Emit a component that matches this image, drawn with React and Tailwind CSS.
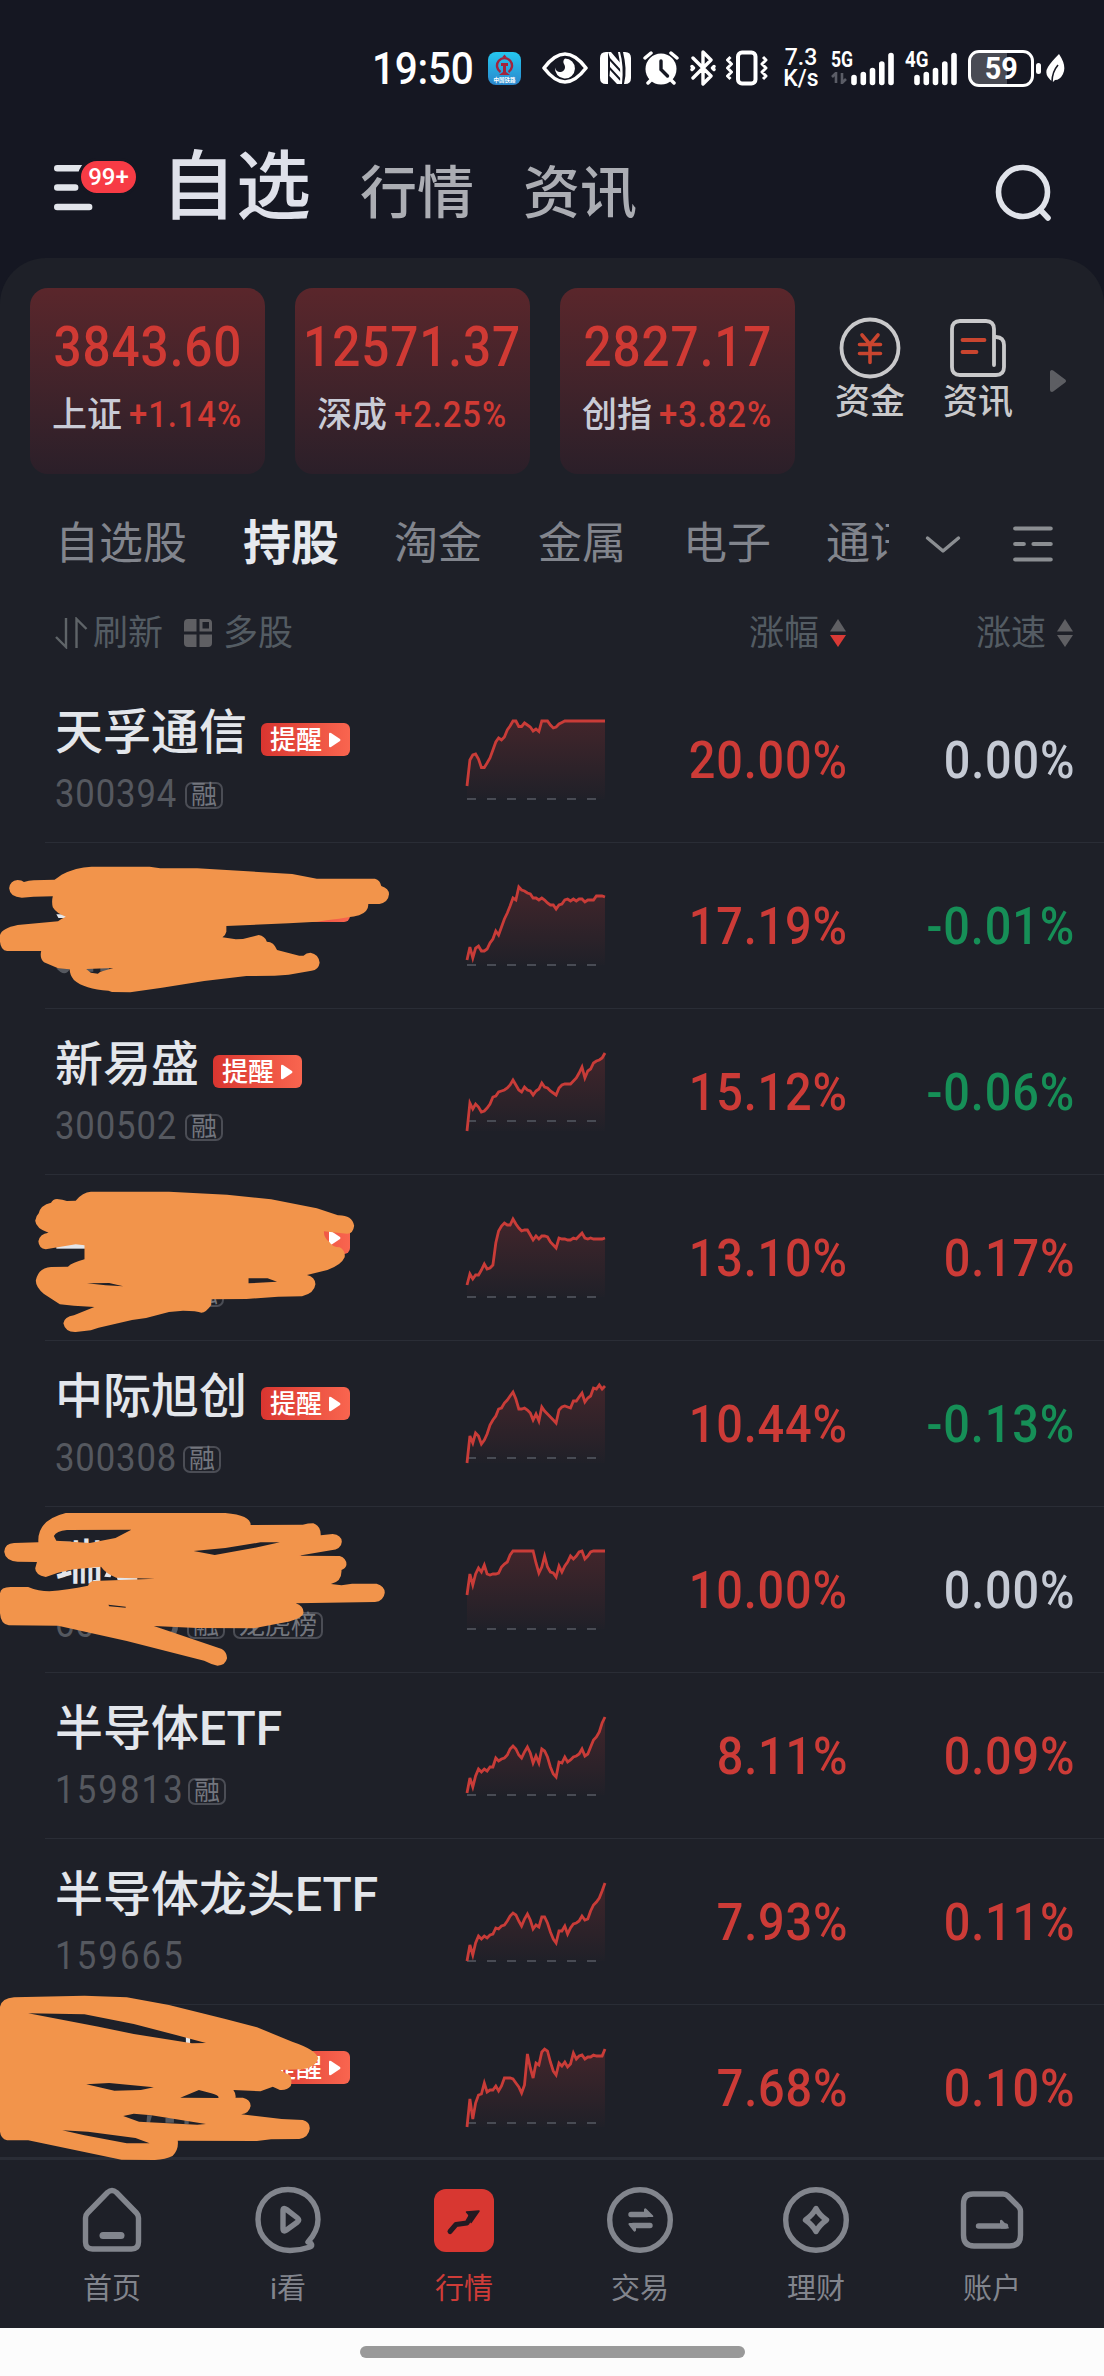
import React from 'react';
import clsx from 'clsx';

const INDICES = [
  { name: '上证', value: '3843.60', change: '+1.14%' },
  { name: '深成', value: '12571.37', change: '+2.25%' },
  { name: '创指', value: '2827.17', change: '+3.82%' }
];

const STOCKS = [
  {
    name: '天孚通信', code: '300394', codeWidth: 130, alert: true, tags: ['融'], change: '20.00%', speed: '0.00%', base: 78,
    line: [65, 39, 34, 33, 38, 46.5, 46.5, 42, 37, 29, 21, 17, 19, 16, 9, 5, 0, 0, 5.5, 5.5, 2, 4, 6, 10, 8, 10.5, 0, 0, 0, 4, 7, 6, 3, 1.5, 0, 0, 0, 0, 0, 0, 0, 0, 0, 0, 0, 0, 0, 0, 0]
  },
  {
    nameWidth: 192, alert: true, change: '17.19%', speed: '-0.01%', base: 78,
    line: [73, 60, 71, 61, 59, 64, 64, 62, 56, 52, 44, 48, 40, 32, 26, 19, 11, 13, 0, 3, 4, 6, 7, 11, 11, 13, 11, 13, 16, 18, 18, 22, 18, 17, 13, 12, 14, 12, 14, 12, 12, 15, 13, 13, 13, 9, 9, 9, 10]
  },
  {
    name: '新易盛', code: '300502', codeWidth: 130, alert: true, tags: ['融'], change: '15.12%', speed: '-0.06%', base: 68,
    line: [78, 50, 56, 51, 54, 59, 58, 55, 51, 44, 43, 39, 38, 37, 35, 32, 27, 32, 37, 39, 34, 37, 38, 42, 38, 36, 30, 34, 35, 38, 40, 42, 35, 32, 31, 31, 31, 28, 25, 20, 14, 25, 18, 16, 10, 8, 7, 5, 0]
  },
  {
    nameWidth: 192, codeWidth: 131, alert: true, tags: ['融'], change: '13.10%', speed: '0.17%', base: 78,
    line: [66, 55, 60, 56, 56, 51, 45, 50, 49, 46, 24, 12, 7, 4, 6, 6, 0, 5, 9, 12, 11, 11, 16, 21, 17, 20, 17, 17, 18, 23, 26, 29, 19, 20, 20, 21, 21, 19, 20, 17, 14, 19, 20, 19, 20, 20, 20, 20, 19]
  },
  {
    name: '中际旭创', code: '300308', codeWidth: 128, alert: true, tags: ['融'], change: '10.44%', speed: '-0.13%', base: 73,
    line: [78, 51, 58, 48, 51, 59, 55, 49, 40, 35, 31, 24, 23, 18, 15, 11, 7, 14, 24, 24, 23, 25, 28, 35, 29, 36, 22, 26, 29, 32, 35, 38, 25, 22, 21, 22, 23, 16, 16, 12, 8, 17, 13, 11, 3, 4, 0, 4, 1]
  },
  {
    name: '瑞', nameWidth: 144, code: '60', codeWidth: 132, alert: true, tags: ['融', '龙虎榜'], change: '10.00%', speed: '0.00%', base: 78,
    line: [44, 23, 34, 23, 17, 21, 14, 23, 24, 23, 23, 22, 16, 13, 11, 4, 0, 0, 0, 0, 0, 0, 0, 0, 12, 22, 16, 5, 16, 21, 22, 26, 15, 21, 15, 11, 5, 8, 5, 1, 0, 8, 5, 1, 0, 0, 0, 0, 0]
  },
  {
    name: '半导体ETF', code: '159813', codeWidth: 133, tags: ['融'], change: '8.11%', speed: '0.09%', base: 78, wideCode: true,
    line: [76, 61, 70, 59, 52, 55, 52, 54, 50, 50, 41, 44, 42, 41, 38, 32, 29, 32, 38, 41, 35, 30, 36, 46, 39, 46, 32, 34, 40, 50, 57, 60, 45, 46, 40, 45, 43, 40, 39, 37, 32, 39, 37, 30, 23, 20, 15, 6, 0]
  },
  {
    name: '半导体龙头ETF', code: '159665', change: '7.93%', speed: '0.11%', base: 78, wideCode: true,
    line: [78, 62, 72, 60, 53, 56, 53, 55, 52, 51, 45, 46, 43, 42, 38, 33, 30, 32, 38, 43, 36, 31, 37, 46, 42, 44, 34, 34, 40, 49, 56, 60, 48, 48, 43, 51, 45, 41, 40, 38, 33, 37, 36, 28, 22, 19, 15, 8, 0]
  },
  {
    nameWidth: 192, alert: true, change: '7.68%', speed: '0.10%', base: 74,
    line: [78, 50, 70, 54, 46, 45, 34, 43, 41, 41, 37, 42, 37, 29, 29, 29, 30, 34, 38, 44, 36, 5, 19, 29, 14, 16, 3, 0, 2, 13, 22, 26, 14, 17, 13, 18, 15, 4, 10, 7, 6, 10, 8, 8, 6, 7, 7, 7, 0]
  }
];

// Tall narrow digits
const Num = ({ children, className, spacing = 'tracking-[1px]' }) => (
  <span className={clsx('inline-block scale-x-90 whitespace-nowrap leading-none', spacing, className)}>{children}</span>
);

const SignalBars = () => (
  <svg width="44" height="34" viewBox="0 0 44 34" stroke="#fff" strokeWidth="5.6" strokeLinecap="round">
    <path d="M3 25.5v5M12.3 22.5v8M21.5 18.5v12M30.8 12v18.500M40 3.500v27" />
  </svg>
);

const StatusBar = () => (
  <div className="flex h-[136px] items-center pl-[372px] text-white">
    <div className="w-[116px]">
      <Num className="origin-left text-[45px] font-medium" spacing="tracking-[-0.3px]">19:50</Num>
    </div>
    <svg width="33" height="33" viewBox="0 0 33 33">
      <defs>
        <linearGradient id="rail" x1="0" y1="0" x2="0" y2="1">
          <stop offset="0" stopColor="#25c8f0" />
          <stop offset="1" stopColor="#2a86cc" />
        </linearGradient>
      </defs>
      <rect width="33" height="33" rx="8" fill="url(#rail)" />
      <path d="M12.500 20A7.500 7.500 0 1 1 20.500 20" fill="none" stroke="#a3243c" strokeWidth="2.400" />
      <path d="M13 11h7v3h-2v6l4 3H11l4-3v-6h-2z" fill="#a3243c" />
      <path d="M14 5.500l2.500-3 2.500 3z" fill="#a3243c" />
      <text x="16.500" y="30" fontSize="5.500" fontWeight="700" fill="#fff" textAnchor="middle">中国铁路</text>
    </svg>
    <svg className="ml-[21px]" width="46" height="32" viewBox="0 0 46 32" fill="none">
      <path d="M2 16C10 5.500 16 2 23 2s13 3.500 21 14C36 26.500 30 30 23 30S10 26.500 2 16z" stroke="#fff" strokeWidth="3.600" strokeLinejoin="round" />
      <path d="M23 6.500a10 10 0 1 1-10 9c1 4 3.500 5 6 4.500 4-1 5-5 3-8-1-1.500-1-4 1-5.500z" fill="#fff" />
    </svg>
    <svg className="ml-[12px]" width="31" height="32" viewBox="0 0 31 32" fill="#fff">
      <path d="M6 0h2v32H6q-6 0-6-6V6q0-6 6-6zM23 0h2q6 0 6 6v20q0 6-6 6h-1q2-8 1.500-16T23 0z" />
      <path d="M8 0h3l11 13v6L10 6zM10 9l12 13v6L10 15zM10 18l12 13v1h-5L9.500 24z" />
      <path d="M18 0h2q4 14 2 32h-2q1-20-2-32z" />
    </svg>
    <svg className="ml-[12px]" width="36" height="34" viewBox="0 0 36 34">
      <circle cx="18" cy="18" r="15.500" fill="#fff" />
      <path d="M2 7l6-5M34 7l-6-5M5 32l4-4M31 32l-4-4" stroke="#fff" strokeWidth="3.500" strokeLinecap="round" />
      <path d="M18 10v8.500l6.500 6.500" stroke="#151722" strokeWidth="3.400" strokeLinecap="round" fill="none" />
    </svg>
    <svg className="ml-[11px]" width="26" height="36" viewBox="0 0 26 36" fill="none" stroke="#fff" strokeWidth="3.400" strokeLinejoin="round" strokeLinecap="round">
      <path d="M3 8l18 18-8 8V2l8 8L3 28M2 16.500l1.500 1.500L2 19.500M24 16.500l-1.500 1.500 1.500 1.500" />
    </svg>
    <svg className="ml-[9px]" width="43" height="36" viewBox="0 0 43 36" fill="none" stroke="#fff">
      <rect x="13" y="2.500" width="17.500" height="31" rx="4" strokeWidth="4" />
      <path d="M5.500 7l-3 3 4 4-4 4 4 4-4 4 3 3M38 7l3 3-4 4 4 4-4 4 4 4-3 3" strokeWidth="3" strokeLinejoin="round" />
    </svg>
    <div className="ml-[15px] w-[36px] text-center text-[23px] leading-[21px] font-medium">
      <div>7.3</div>
      <div>K/s</div>
    </div>
    <div className="relative ml-[12px] flex h-[36px] w-[64px] items-end justify-end">
      <span className="absolute top-[-1px] left-0 origin-left scale-x-[.8] text-[22px] leading-none font-bold">5G</span>
      <svg className="absolute bottom-[2px] left-0" width="16" height="12" viewBox="0 0 16 12" stroke="#5a5c66" strokeWidth="2.600" fill="none">
        <path d="M1 5l4-4v10M15 7l-4 4V1" />
      </svg>
      <SignalBars />
    </div>
    <div className="relative ml-[10px] flex h-[36px] w-[53px] items-end justify-end">
      <span className="absolute top-[-1px] left-0 origin-left scale-x-[.85] text-[22px] leading-none font-bold">4G</span>
      <SignalBars />
    </div>
    <div className="ml-[10px] flex h-[37px] w-[66px] shrink-0 items-center justify-center rounded-[11px] border-[3px] border-white bg-linear-to-r from-[#494b54] from-60% to-[#151722] to-60% text-[32px] leading-none font-bold">
      <Num spacing="tracking-[0px]">59</Num>
    </div>
    <div className="ml-[2px] h-[11px] w-[5px] shrink-0 rounded-full bg-white" />
    <svg className="ml-[5px] shrink-0" width="20" height="30" viewBox="0 0 20 30">
      <path d="M13 1q8 12 4 20-3 6-8 6l-2 2Q-3 22 2 14q3-5 11-13z" fill="#fff" />
      <path d="M6 29q0-10 6-17" stroke="#151722" strokeWidth="1.600" fill="none" />
    </svg>
  </div>
);

const Header = () => (
  <div className="flex h-[122px] items-start pl-[54px]">
    <div className="relative h-[46px] w-[82px] pt-[29px]">
      <svg width="40" height="46" viewBox="0 0 40 46" stroke="#e2e5eb" strokeWidth="6.400" strokeLinecap="round">
        <path d="M3.200 3.200h24M3.200 22.500h18M3.200 42h32" />
      </svg>
      <span className="absolute top-[22px] left-[24px] flex h-[38px] w-[61px] items-center justify-center rounded-full border-[3px] border-[#151722] bg-[#f73b45] text-[24px] leading-none font-medium text-white">
        99+
      </span>
    </div>
    <div className="ml-[25px] flex items-baseline leading-none">
      <span className="mt-[14px] text-[75px] font-medium text-[#dfe1ea]">自选</span>
      <span className="ml-[49px] text-[57px] font-medium text-[#abadb3]">行情</span>
      <span className="ml-[49px] text-[57px] font-medium text-[#abadb3]">资讯</span>
    </div>
    <svg className="mt-[28px] mr-[52px] ml-auto" width="58" height="58" viewBox="0 0 58 58" fill="none" stroke="#e0e3ea" strokeWidth="5.600" strokeLinecap="round">
      <circle cx="29" cy="28" r="24.500" />
      <path d="M46 45.500l8 8.500" />
    </svg>
  </div>
);

const IndexCard = ({ name, value, change }) => (
  <div className="h-[186px] w-[235px] rounded-[18px] bg-linear-to-b from-[#5a262b] to-[#2b1f29] pt-[32px]">
    <div className="flex justify-center text-[55px] leading-none text-[#d03a34]">
      <Num className="font-medium">{value}</Num>
    </div>
    <div className="mt-[22px] flex items-center pl-[22px] text-[35px] leading-none">
      <span className="w-[77px] font-medium text-[#c9cbd6]">{name}</span>
      <Num className="origin-left text-[36.500px] font-medium text-[#d03a34]">{change}</Num>
    </div>
  </div>
);

const IndexBar = () => (
  <div className="flex gap-[30px] pt-[30px] pl-[30px]">
    {INDICES.map((item) => (
      <IndexCard key={item.name} {...item} />
    ))}
    <div className="flex pt-[29px] text-[35px] leading-none font-medium text-[#c9c9cb]">
      <div className="ml-[10px] flex w-[70px] flex-col items-center">
        <svg width="62" height="62" viewBox="0 0 62 62" fill="none" strokeLinecap="round">
          <circle cx="31" cy="31" r="28.500" stroke="#c9c9cb" strokeWidth="3.800" />
          <path d="M23 18l8 9.500 8-9.500M20.500 27.500h21M20.500 36.500h21M31 27.500v18" stroke="#c9452f" strokeWidth="3.600" />
        </svg>
        <span className="mt-[6px]">资金</span>
      </div>
      <div className="ml-[38px] flex w-[70px] flex-col items-center">
        <svg width="62" height="62" viewBox="0 0 62 62" fill="none" stroke="#c9c9cb" strokeWidth="3.800" strokeLinecap="round">
          <path d="M47 48V12q0-8-8-8H13q-8 0-8 8v38q0 8 8 8h36q8 0 8-8V28q0-8-8-8" />
          <path d="M15.500 23h22M15.500 35h14" stroke="#c9452f" />
        </svg>
        <span className="mt-[6px]">资讯</span>
      </div>
      <svg className="mt-[52px] ml-[37px]" width="18" height="24" viewBox="0 0 18 24">
        <path d="M2 3v18l12-9z" fill="#5d5e63" stroke="#5d5e63" strokeWidth="4" strokeLinejoin="round" />
      </svg>
    </div>
  </div>
);

const Tabs = () => (
  <div className="mt-[45px] flex h-[50px] items-center pl-[55px] text-[44px] leading-none text-[#82858d]">
    <div className="flex h-[70px] w-[834px] items-center overflow-hidden whitespace-nowrap">
      <span className="w-[188px] shrink-0">自选股</span>
      <span className="w-[151px] shrink-0 text-[48px] font-bold text-[#e6e9ee]">持股</span>
      <span className="w-[144px] shrink-0">淘金</span>
      <span className="w-[145px] shrink-0">金属</span>
      <span className="w-[143px] shrink-0">电子</span>
      <span className="shrink-0">通讯</span>
    </div>
    <svg className="ml-[36px]" width="36" height="20" viewBox="0 0 36 20" fill="none" stroke="#8b8e92" strokeWidth="3.400" strokeLinecap="round" strokeLinejoin="round">
      <path d="M2.500 4L18 17 33.500 4" />
    </svg>
    <svg className="ml-[52px]" width="40" height="36" viewBox="0 0 40 36" stroke="#8b8e92" strokeWidth="4.200" strokeLinecap="round">
      <path d="M2.200 2.500h35.500M2.200 18h8.600M20.500 18h17.200M2.200 33.500h35.500" />
    </svg>
  </div>
);

const SortArrows = ({ active }) => (
  <svg width="16" height="30" viewBox="0 0 16 30">
    <path d="M8 1l8 12.500H0z" fill="#5f5f63" />
    <path d="M8 29L0 17h16z" fill={active ? '#d93a36' : '#5f5f63'} />
  </svg>
);

const FilterRow = () => (
  <div className="mt-[46px] flex h-[36px] items-center pl-[55px] text-[35px] leading-none text-[#545c63]">
    <svg width="33" height="32" viewBox="0 0 33 32" fill="none" stroke="#5f6468" strokeWidth="2.400">
      <path d="M11 1v29L1 20M21.500 31V2l10 10" />
    </svg>
    <span className="mt-px ml-[5px]">刷新</span>
    <svg className="ml-[21px]" width="28" height="28" viewBox="0 0 28 28" fill="#5f5f63">
      <path d="M4 0h8.500v12.500H0V4q0-4 4-4zM0 15.500h12.500V28H4q-4 0-4-4zM15.500 15.500H28V24q0 4-4 4h-8.500z" />
      <path fillRule="evenodd" d="M15.500 0H24q4 0 4 4v8.500H15.500zM18.500 3v6.500H25V3z" />
    </svg>
    <span className="mt-px ml-[11px]">多股</span>
    <span className="mt-px ml-auto">涨幅</span>
    <span className="ml-[11px] w-[16px]"><SortArrows active /></span>
    <span className="mt-px ml-[130px]">涨速</span>
    <span className="mr-[31px] ml-[11px] w-[16px]"><SortArrows /></span>
  </div>
);

const Sparkline = ({ line, base }) => {
  const step = 138 / (line.length - 1);
  const points = line.map((y, i) => `${(i * step + 2).toFixed(1)} ${y + 3}`).join('L');
  return (
    <svg className="mt-[41px] shrink-0" width="142" height="90" viewBox="0 0 142 90" fill="none">
      <defs>
        <linearGradient id="fade" gradientUnits="userSpaceOnUse" x1="0" y1="0" x2="0" y2="80">
          <stop offset="0" stopColor="#d93a36" stopOpacity=".2" />
          <stop offset="1" stopColor="#d93a36" stopOpacity=".01" />
        </linearGradient>
      </defs>
      <path d={`M${points}V81H2z`} fill="url(#fade)" />
      <path d={`M2 ${base + 3}h131`} stroke="#484b54" strokeWidth="2" strokeDasharray="9 11" />
      <path d={`M${points}`} stroke="#c93c38" strokeWidth="2.800" />
    </svg>
  );
};

const AlertTag = () => (
  <span className="mt-[13px] ml-[14px] flex h-[33px] w-[89px] items-center rounded-[6px] bg-linear-to-r from-[#d93530] to-[#f9654f] pl-[9px] text-[26px] leading-none font-medium text-white">
    <span className="mt-px">提醒</span>
    <svg className="ml-[7px]" width="12" height="16" viewBox="0 0 12 16" fill="#fff">
      <path d="M0 2q0-2 2-1l9 6q1 1 0 2l-9 6q-2 1-2-1z" />
    </svg>
  </span>
);

const speedColor = (speed) => {
  if (speed.startsWith('-')) return 'text-[#168f57]';
  return speed === '0.00%' ? 'text-[#c5cad4]' : 'text-[#cc3b37]';
};

const StockRow = ({ name, nameWidth, code, codeWidth, wideCode, alert, tags = [], change, speed, line, base }) => (
  <div className="relative flex h-[166px] shrink-0 pl-[55px]">
    <div className="w-[410px] shrink-0 pt-[32px]">
      <div className="flex h-[48px] items-center">
        <span className="text-[48px] leading-none font-medium whitespace-nowrap text-[#e3e6eb]" style={{ width: nameWidth }}>{name}</span>
        {alert && <AlertTag />}
      </div>
      <div className="mt-[17px] flex h-[40px] items-center text-[38.500px] text-[#55585f]">
        <span className="shrink-0 leading-none" style={{ width: codeWidth }}>
          <Num className="origin-left" spacing={wideCode ? 'tracking-[2.4px]' : 'tracking-[1px]'}>{code}</Num>
        </span>
        {tags.map((tag) => (
          <span key={tag} className="mt-[2px] mr-[8px] flex h-[27px] items-center rounded-[7px] border-2 border-[#4b4d55] px-[4px] text-[26px] leading-none text-[#73767e]">{tag}</span>
        ))}
      </div>
    </div>
    <Sparkline line={line} base={base} />
    <div className="w-[241px] pt-[58px] text-right text-[52px] leading-none text-[#cc3b37]">
      <Num className="origin-right font-medium">{change}</Num>
    </div>
    <div className={clsx('w-[227px] pt-[58px] text-right text-[52px] leading-none', speedColor(speed))}>
      <Num className="origin-right font-medium">{speed}</Num>
    </div>
    <div className="absolute right-0 bottom-0 left-[45px] h-px bg-[#2a2d36]" />
  </div>
);

// Freehand marker strokes that cover some of the names
const Marker = ({ className, d, under, viewBox }) => (
  <svg className={clsx('absolute left-0', className)} viewBox={viewBox} preserveAspectRatio="none">
    {under}
    <path d={d} fill="#f2944b" fillRule="evenodd" />
  </svg>
);

const Markers = () => (
  <>
    <Marker
      className="top-[860px] h-[140px] w-[552px]"
      viewBox="0 570 1568 420"
      under={
        <>
          <path d="M160 733h30v11h-24z" fill="#e3e6eb" />
          <path d="M160 895h40q-15 30-40 0zM245 893h20v12h-20zM285 893h25v10h-25z" fill="#55585f" />
        </>
      }
      d="M50 630Q62 630 68 636Q82 631 96 631L155 629Q165 622 175 614Q215 592 260 590L425 590L455 595L560 595L830 612L900 626L1065 626Q1080 630 1083 648Q1105 655 1105 673Q1103 697 1078 702L1046 702Q1048 725 1020 736Q1000 742 900 755L820 760L643 768L643 785Q640 797 632 802L670 808L690 807L735 795Q752 798 758 815Q778 815 787 840L850 857L862 857Q870 848 882 848Q905 852 908 878Q905 900 885 902L820 914L780 917L700 918L580 933L460 953L370 967L318 966L308 962Q240 958 210 930Q198 915 198 898L165 895L125 877Q112 865 117 843L20 843Q2 840 0 815L0 795Q5 775 50 765L165 754Q175 745 187 740Q160 730 150 712Q146 695 150 679L95 680L62 683Q28 682 26 655Q28 632 50 630ZM245 897L322 894L285 905L278 911L258 908Z"
    />
    <Marker
      className="top-[1170px] h-[170px] w-[552px]"
      viewBox="0 0 1568 510"
      under={<path d="M160 222h82v14h-82z" fill="#e3e6eb" />}
      d="M162 87Q178 88 190 93L215 92Q235 66 258 65L480 65L645 74L770 88L900 115L960 136Q1000 135 1006 167Q1003 192 985 191L920 184Q920 205 935 215Q945 232 965 232Q982 242 979 262Q970 285 930 300L872 315Q895 320 896 343Q893 370 858 379L790 380L700 387L600 388L600 405Q585 428 572 428Q560 422 520 422L480 426L415 444L375 450L280 473L258 481L215 486Q185 487 180 460Q183 440 210 436L268 411L210 407L170 403L125 372Q100 350 102 330Q110 293 145 291L193 290Q205 278 240 268L240 226L215 223L130 238Q110 235 109 214Q112 192 138 188Q102 175 100 152Q102 138 110 130Q115 105 145 98Q150 88 162 87ZM247 340L310 339L350 349L300 346ZM706 325L760 325L787 335L706 340Z"
    />
    <Marker
      className="top-[1505px] h-[165px] w-[552px]"
      viewBox="0 1005 1568 495"
      under={
        <>
          <path d="M296 1220l12-26 14 4-8 24zM330 1216h60v14h-56z" fill="#e3e6eb" />
          <path d="M478 1400q28 4 28-34h-16q2 22-14 22z" fill="#55585f" />
          <path d="M550 1110h250v50h-250z" fill="#1e2028" />
        </>
      }
      d="M187 1029L640 1029Q712 1035 712 1065L860 1064Q875 1060 890 1060Q912 1068 911 1096L945 1092Q970 1095 971 1115Q970 1137 940 1141L848 1157L965 1158Q985 1165 984 1185Q982 1195 970 1200Q972 1235 940 1242L970 1246L1000 1241L1070 1241Q1093 1248 1093 1268Q1090 1293 1065 1296L840 1300Q863 1308 862 1328Q860 1345 810 1357L720 1375L560 1374L437 1368L630 1437Q645 1447 645 1465Q640 1487 618 1487Q600 1483 580 1472L360 1413L165 1367L25 1366Q2 1363 0 1330L0 1270Q2 1251 30 1251L80 1251Q110 1264 140 1264Q190 1260 250 1247Q255 1235 265 1233L440 1226L330 1223Q300 1210 287 1190L210 1198L165 1208L130 1221Q100 1215 100 1195L105 1176L50 1175Q15 1172 12 1145Q14 1120 40 1119L109 1117Q105 1050 187 1029ZM190 1080L373 1079L328 1104L255 1119L160 1112L153 1098Q160 1083 190 1080ZM550 1143L640 1134L740 1117L795 1117L720 1134L610 1155ZM308 1304L357 1310L357 1313L310 1309Z"
    />
    <Marker
      className="top-[1990px] h-[170px] w-[552px]"
      viewBox="0 960 1568 510"
      under={
        <>
          <path d="M528 1098h12v24h-12z" fill="#e3e6eb" />
          <path d="M418 1336h14l-6 22h-10zM470 1344h24v14h-24zM524 1350h12v12h-12z" fill="#55585f" />
        </>
      }
      d="M40 982L240 977L360 982L480 1005L640 1047L730 1072L830 1115Q900 1140 904 1165Q900 1190 860 1198L795 1200L825 1217Q830 1235 826 1248Q815 1262 795 1260L775 1250L740 1264L663 1260Q671 1272 669 1283L690 1283Q712 1288 712 1308Q708 1330 685 1333L800 1347L860 1350Q880 1355 880 1375Q877 1403 850 1407L770 1408L730 1413L505 1412Q508 1440 490 1458Q470 1469 440 1470L345 1469L80 1411L20 1411Q2 1405 0 1385L0 1010Q5 985 40 982ZM80 1030L240 1033L380 1062L500 1095L585 1119L545 1120L380 1092L280 1070ZM245 1243L310 1239L437 1252L400 1260L325 1262ZM512 1283L565 1260L600 1270Q625 1278 620 1284ZM350 1338L380 1331L430 1336L585 1362L560 1364L395 1355ZM177 1381L250 1385L385 1404L425 1420L360 1420L240 1396Z"
    />
  </>
);

const NAV_ITEMS = [
  {
    label: '首页',
    icon: (
      <>
        <path d="M8.500 29l20-20.500q4.500-4 9 0l20 20.500q2 2 2 5v24q0 7-7 7h-39q-7 0-7-7V34q0-3 2-5z" />
        <path d="M24 51.500h18" strokeWidth="7" />
      </>
    )
  },
  {
    label: 'i看',
    icon: (
      <>
        <path d="M53 58Q63 47 63 35.500C63 18 50 5.500 33 5.500S3 18 3 35.500s14 31 32 31q10 0 20-3.500 3-1 1-3.500l-1.500-2" />
        <path d="M28 27v17.500q0 4 3.500 1.500l11-8q2.500-2 0-4l-11-8.500q-3.500-2.500-3.500 1z" />
      </>
    )
  },
  {
    label: '行情',
    active: true,
    icon: (
      <>
        <rect x="3" y="5" width="60" height="63" rx="12" fill="#d83731" stroke="none" />
        <path d="M19 47.500l6-7 11-1.500 4-7" stroke="#231a22" strokeWidth="5" />
        <path d="M35.500 28l12.500-1-8 11.500q0-6-4.500-10.500z" fill="#231a22" stroke="#231a22" strokeWidth="1.500" />
      </>
    )
  },
  {
    label: '交易',
    icon: (
      <>
        <circle cx="33" cy="36" r="30.300" />
        <path d="M24 30.500h16M26 41.500h17" />
        <path d="M37 29v-3.500q1-2 2.500-.5l6.500 6.500q1 1.500-1 1.500h-6zM29 42v4.500q-1 2-2.500.5L21.500 40.500q-.5-1.500 1-1.500H29z" fill="#82858d" stroke="none" />
      </>
    )
  },
  {
    label: '理财',
    icon: (
      <>
        <circle cx="33" cy="36" r="30.300" />
        <path d="M33 24.500q3 6 10.500 11.500Q36 41.500 33 47.500 30 41.500 22.500 36 30 30.500 33 24.500z" />
      </>
    )
  },
  {
    label: '账户',
    icon: (
      <>
        <path d="M14 10h30q3 0 5 2l9 9q3.500 3 3.500 6v24q0 11-11 11H15Q4.500 62 4.500 51V20q0-10 9.500-10z" />
        <path d="M19.500 42h27" />
        <path d="M41 40v-3.500q1-1.500 2.500 0l6 6.500q1 1.500-1 1.500H42z" fill="#82858d" stroke="none" />
      </>
    )
  }
];

const BottomNav = () => (
  <div className="flex h-[171px] border-t-[3px] border-[#2a2d36] px-[24px] pt-[24px]">
    {NAV_ITEMS.map(({ label, icon, active }) => (
      <div key={label} className={clsx('flex w-[176px] flex-col items-center text-[29px] leading-none', active ? 'text-[#cf3c38]' : 'text-[#82858d]')}>
        <svg width="66" height="72" viewBox="0 0 66 72" fill="none" stroke="#82858d" strokeWidth="5.400" strokeLinecap="round" strokeLinejoin="round">
          {icon}
        </svg>
        <span className="mt-[19px]">{label}</span>
      </div>
    ))}
  </div>
);

const App = () => (
  <div lang="zh-CN" className="relative flex h-[2376px] w-[1104px] flex-col overflow-hidden bg-[#151722] [font-family:Roboto,'Noto_Sans_CJK_SC',sans-serif]">
    <StatusBar />
    <Header />
    <div className="flex h-[2070px] flex-col rounded-t-[46px] bg-[#1e2028]">
      <IndexBar />
      <Tabs />
      <FilterRow />
      <div className="mt-[26px] flex h-[1480px] shrink-0 flex-col overflow-hidden">
        {STOCKS.map((stock, i) => (
          <StockRow key={i} {...stock} />
        ))}
      </div>
      <BottomNav />
    </div>
    <div className="flex h-[48px] justify-center bg-[#fcfcfc] pt-[18px]">
      <div className="h-[12px] w-[385px] rounded-full bg-[#999]" />
    </div>
    <Markers />
  </div>
);

export default App;
